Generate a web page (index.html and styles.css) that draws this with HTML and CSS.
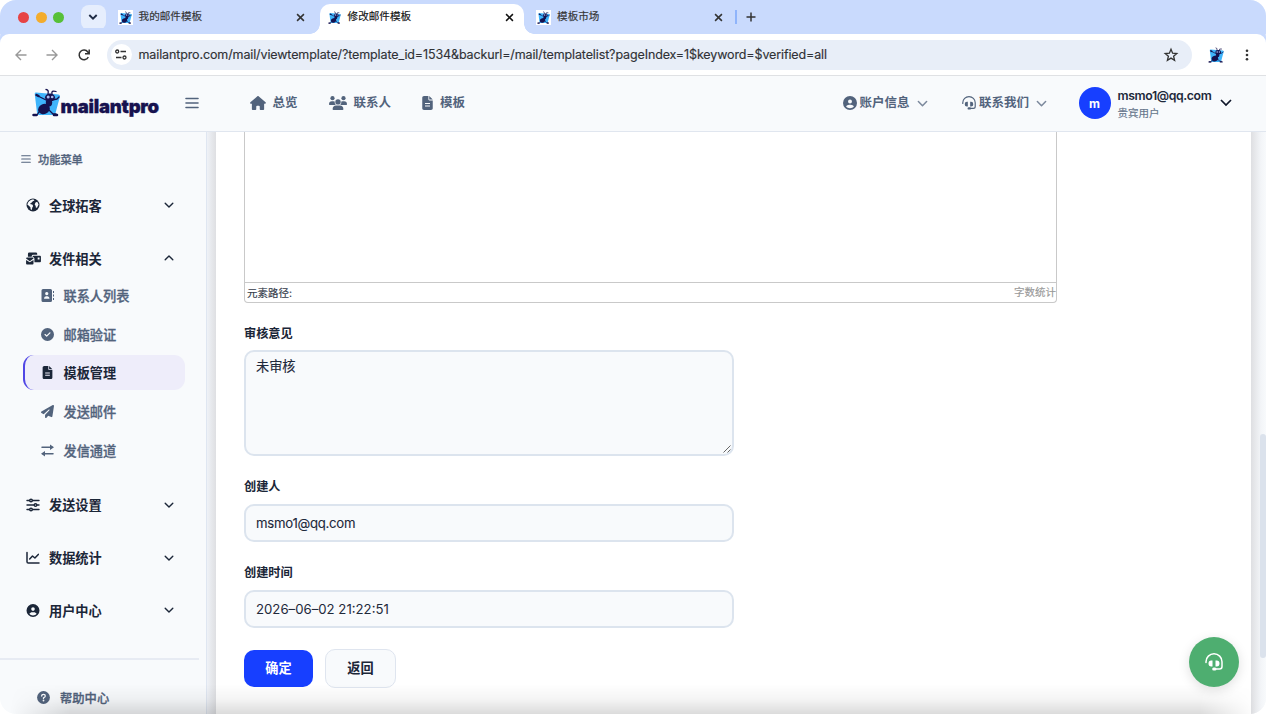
FILE: index.html
```html
<!DOCTYPE html>
<html lang="zh-CN">
<head>
<meta charset="utf-8">
<title>修改邮件模板</title>
<link rel="stylesheet" href="styles.css">
</head>
<body>
<svg class="defs" width="0" height="0">
  <symbol id="ant" viewBox="0 0 28 29">
    <path fill="#3fb4fb" d="M4 4.500Q2.400 4.500 2.800 6.500L5 25q.2 2 2 2h14q2 0 2.400-1.600L28 8.500q.2-1.500-1.500-2z"/>
    <path fill="none" stroke="#15124f" stroke-width="1.300" stroke-linecap="round" stroke-linejoin="round" d="M16 6q1-4.500-2-4.500M20 6q-1-4 4-2.500M14 12 5 7.500M20 12l5-1 2-2M9 21l-4 6H2M15 20l6 6h3"/>
    <ellipse cx="18" cy="9.500" rx="5" ry="4" fill="#15124f"/>
    <ellipse cx="17" cy="14.500" rx="3.200" ry="4" fill="#15124f"/>
    <ellipse cx="12" cy="21" rx="6" ry="5" fill="#15124f" transform="rotate(-25 12 21)"/>
    <path stroke="#15124f" stroke-width="2.500" stroke-linecap="round" d="M1.500 27h3M22 27h3M4.500 7l2 1"/>
    <circle cx="16.200" cy="9" r="1.500" fill="#a9bdf0"/><circle cx="20.200" cy="9" r="1.300" fill="#a9bdf0"/>
  </symbol>
  <symbol id="x" viewBox="0 0 10 10"><path d="M1.900 1.900l6.200 6.200M8.100 1.900l-6.200 6.200" fill="none" stroke="currentColor" stroke-width="1.400"/></symbol>
  <symbol id="down" viewBox="0 0 12 12"><path d="M2.200 4.200l3.800 3.800 3.800-3.800" fill="none" stroke="currentColor" stroke-width="1.400" stroke-linecap="round" stroke-linejoin="round"/></symbol>
  <symbol id="bars" viewBox="0 0 14 14"><path d="M1 2.500h12M1 7h12M1 11.500h12" fill="none" stroke="currentColor" stroke-width="1.600" stroke-linecap="round"/></symbol>
  <symbol id="user" viewBox="0 0 512 512"><path fill="currentColor" d="M399 384.200C376.900 345.800 335.400 320 288 320H224c-47.400 0-88.900 25.800-111 64.200c35.200 39.200 86.200 63.800 143 63.800s107.800-24.700 143-63.800zM0 256a256 256 0 1 1 512 0A256 256 0 1 1 0 256zm256 16a72 72 0 1 0 0-144 72 72 0 1 0 0 144z"/></symbol>
  <symbol id="file" viewBox="0 0 384 512"><path fill="currentColor" fill-rule="evenodd" d="M64 0C28.700 0 0 28.700 0 64V448c0 35.300 28.700 64 64 64H320c35.300 0 64-28.700 64-64V160H256c-17.700 0-32-14.300-32-32V0H64zM256 0V128H384L256 0zM100 256H284v36H100zm0 88H284v36H100z"/></symbol>
  <symbol id="headset" viewBox="0 0 18 18"><path fill="none" stroke="currentColor" stroke-width="1.500" stroke-linecap="round" d="M1 9.500V8.700a8 7.900 0 0 1 16 0v4.800q0 2.500-2.500 2.500H10"/><path fill="currentColor" d="M7.500 7.500v6H6.300Q3.500 13.500 3.500 10.500T6.300 7.500zM10.500 7.500v6h1.200q2.800 0 2.800-3T11.700 7.500z"/><rect x="7.200" y="14.500" width="4.300" height="3" rx="1.500" fill="currentColor"/></symbol>
</svg>
<div class="window">
  <header class="tabs">
    <i class="dot red"></i><i class="dot amber"></i><i class="dot green"></i>
    <span class="tabsearch"><svg width="12" height="12" viewBox="0 0 12 12"><path d="M2.300 4l3.700 3.700L9.700 4" fill="none" stroke="currentColor" stroke-width="1.900"/></svg></span>
    <div class="tab first"><span class="fav"><svg width="13" height="13"><use href="#ant"/></svg></span><span>我的邮件模板</span><svg class="close" width="11" height="11"><use href="#x"/></svg></div>
    <div class="tab active"><span class="fav"><svg width="13" height="13"><use href="#ant"/></svg></span><span>修改邮件模板</span><svg class="close" width="11" height="11"><use href="#x"/></svg></div>
    <div class="tab third"><span class="fav"><svg width="13" height="13"><use href="#ant"/></svg></span><span>模板市场</span><svg class="close" width="11" height="11"><use href="#x"/></svg></div>
    <i class="tabsep"></i>
    <svg class="plus" width="10" height="10" viewBox="0 0 10 10"><path d="M5 .5v9M.5 5h9" stroke="#333" stroke-width="1.500"/></svg>
  </header>
  <div class="toolbar">
    <svg class="nav" width="12" height="12" viewBox="0 0 12 12"><path d="M11.500 6H1M6 1 1 6l5 5" fill="none" stroke="#999" stroke-width="1.400"/></svg>
    <svg class="nav" width="12" height="12" viewBox="0 0 12 12"><path d="M.5 6H11M6 1l5 5-5 5" fill="none" stroke="#999" stroke-width="1.400"/></svg>
    <svg class="nav reload" width="12" height="12" viewBox="0 0 12 12"><path d="M10.300 8A4.800 4.800 0 1 1 9.800 3L11 4.500M11.200.5v4.300H7" fill="none" stroke="#333" stroke-width="1.500"/></svg>
    <div class="address">
      <span class="site"><svg width="12" height="11" viewBox="0 0 12 11"><g fill="none" stroke="#333" stroke-width="1.300"><circle cx="2.200" cy="2.500" r="1.500"/><path d="M5.500 2.500H11M1 8.500h5.500"/><circle cx="9.500" cy="8.500" r="1.500"/></g></svg></span>
      <span class="url">mailantpro.com/mail/viewtemplate/?template_id=1534&amp;backurl=/mail/templatelist?pageIndex=1$keyword=$verified=all</span>
      <svg class="star" width="14" height="14" viewBox="0 0 14 14"><path d="M7 1.300l1.600 3.900 4.200.3-3.200 2.700 1 4.100L7 10.100l-3.600 2.200 1-4.100L1.200 5.500l4.200-.3z" fill="none" stroke="#333" stroke-width="1.300"/></svg>
    </div>
    <svg class="ext" width="16" height="16"><use href="#ant"/></svg>
    <svg class="kebab" width="4" height="12" viewBox="0 0 4 12"><g fill="#333"><circle cx="2" cy="1.700" r="1.300"/><circle cx="2" cy="6" r="1.300"/><circle cx="2" cy="10.300" r="1.300"/></g></svg>
  </div>
  <div class="topbar">
    <div class="brand"><svg width="28" height="29"><use href="#ant"/></svg><b>mailantpro</b></div>
    <svg class="burger" width="14" height="14"><use href="#bars"/></svg>
    <nav class="mainnav">
      <a><svg width="16" height="14" viewBox="0 0 576 512"><path fill="currentColor" d="M575.800 255.500c0 18-15 32.100-32 32.100h-32l.7 160.200V472c0 22.100-17.900 40-40 40H392c-22.100 0-40-17.900-40-40V384c0-17.700-14.300-32-32-32H256c-17.700 0-32 14.300-32 32v88c0 22.100-17.900 40-40 40H104c-22.100 0-40-17.900-40-40V287.600H32c-18 0-32-14-32-32.100c0-9 3-17 10-24L266.400 8c7-7 15-8 22-8s15 2 21 7L564.800 231.500c8 7 12 15 11 24z"/></svg><span>总览</span></a>
      <a><svg width="18" height="14" viewBox="0 0 18 14"><g fill="currentColor"><circle cx="3.500" cy="2.200" r="2.100"/><circle cx="14.500" cy="2.200" r="2.100"/><circle cx="9" cy="5.900" r="2.700"/><path d="M0 8.200q0-3 2.900-3h1.300q1 0 1.500.4-.4 1.900 1 3.300H.6Q0 8.900 0 8.200zM18 8.200q0-3-2.900-3h-1.300q-1 0-1.500.4.4 1.900-1 3.300h6.100q.6 0 .6-.7zM3.600 13.200Q3.800 9.500 7 9.500h4q3.200 0 3.400 3.700 0 .8-.8.8H4.400q-.8 0-.8-.8z"/></g></svg><span>联系人</span></a>
      <a><svg width="11" height="14"><use href="#file"/></svg><span>模板</span></a>
    </nav>
    <a class="drop account"><svg width="14" height="14"><use href="#user"/></svg><span>账户信息</span><svg class="chev" width="13" height="13"><use href="#down"/></svg></a>
    <a class="drop contact"><svg width="14" height="14"><use href="#headset"/></svg><span>联系我们</span><svg class="chev" width="13" height="13"><use href="#down"/></svg></a>
    <span class="avatar">m</span>
    <div class="who"><b>msmo1@qq.com</b><small>贵宾用户</small></div>
    <svg class="whochev" width="12" height="8" viewBox="0 0 12 8"><path d="M1 1l5 5 5-5" fill="none" stroke="#0f172a" stroke-width="1.700"/></svg>
  </div>
  <div class="main">
    <aside class="side">
      <div class="sidehead"><svg width="12" height="10"><use href="#bars"/></svg><span>功能菜单</span></div>
      <div class="group"><svg width="14" height="14" viewBox="0 0 14 14"><circle cx="7" cy="7" r="6.500" fill="currentColor"/><path fill="#f8fafc" d="M7.200 1.300 8.500 2.400 6.800 3.200 5.800 4.600 4.300 5.200 4.600 6.300 6.300 6.500 7.200 7.900 6.300 9.500 5.800 12 4.600 11.300 4.400 9.300 2.600 7.400 1.400 6.700Q1.800 2.700 7.200 1.300zM9.500 4.600l1.700-.8L12.600 6.500 11.800 8 11 9.800 9.800 9.600 9.700 8 8.700 6.600z"/></svg><span>全球拓客</span><svg class="chev" width="12" height="12"><use href="#down"/></svg></div>
      <div class="group open"><svg width="15" height="13" viewBox="0 0 16 14"><g fill="currentColor"><path d="M2 5V2q0-1.500 1.500-1.500h7Q12 .5 12 2v1H7.500Q6 3 6 5z"/><path d="M0 7q0-1 1-1h6q1 0 1 1L4 10zM0 8.500l4 2.600 4-2.600V12.500q0 1-1 1H1q-1 0-1-1z"/><path fill-rule="evenodd" d="M8 4h7q1 0 1 1v5q0 1-1 1H9V7Q9 5.500 7 5 7 4 8 4zm4.500 2v2h2V6z"/></g></svg><span>发件相关</span><svg class="chev up" width="12" height="12"><use href="#down"/></svg></div>
      <ul class="sub">
        <li><svg width="13" height="13" viewBox="0 0 13 13"><path fill="currentColor" fill-rule="evenodd" d="M2 0h7.500q1.500 0 1.500 1.500v10q0 1.500-1.500 1.500H2Q.5 13 .5 11.500v-10Q.5 0 2 0zM12 2h1v2h-1zM12 5.500h1v2h-1zM12 9h1v2h-1zM5.700 3a1.600 1.600 0 1 0 .1 0zM3 9.800h5.500Q8.500 7.300 6.500 7.300H5Q3 7.300 3 9.800z"/></svg><span>联系人列表</span></li>
        <li><svg width="13" height="13" viewBox="0 0 512 512"><path fill="currentColor" d="M256 512A256 256 0 1 0 256 0a256 256 0 1 0 0 512zM369 209L241 337c-9.400 9.400-24.600 9.400-33.900 0l-64-64c-9.400-9.400-9.400-24.600 0-33.900s24.600-9.400 33.900 0l47 47L335 175c9.400-9.400 24.600-9.400 33.900 0s9.400 24.600 0 33.900z"/></svg><span>邮箱验证</span></li>
        <li class="current"><svg width="13" height="13"><use href="#file"/></svg><span>模板管理</span></li>
        <li><svg width="13" height="13" viewBox="0 0 512 512"><path fill="currentColor" d="M498.100 5.600c10.100 7 15.400 19.100 13.500 31.200l-64 416c-1.500 9.700-7.400 18.200-16 23s-18.900 5.400-28 1.600L284 427.700l-68.500 74.100c-8.900 9.700-22.900 12.900-35.200 8.100S160 493.200 160 480V396.400c0-4 1.500-7.800 4.200-10.700L331.800 202.800c5.800-6.300 5.600-16-.4-22s-15.700-6.400-22-.7L106 360.800 17.700 316.600C7.100 311.300 .3 300.700 0 288.900s5.900-22.800 16.100-28.700l448-256c10.700-6.100 23.900-5.500 34 1.400z"/></svg><span>发送邮件</span></li>
        <li><svg width="13" height="13" viewBox="0 0 13 13"><path fill="none" stroke="currentColor" stroke-width="1.500" stroke-linecap="round" d="M1 3.300h10M2 9.700h10"/><path fill="currentColor" d="M9 .5l4 2.800-4 2.800zM4 6.900 0 9.700l4 2.800z"/></svg><span>发信通道</span></li>
      </ul>
      <div class="group"><svg width="14" height="14" viewBox="0 0 14 14"><g fill="#f8fafc" stroke="currentColor" stroke-width="1.400" stroke-linecap="round"><path d="M1 2.500h12M1 7h12M1 11.500h12"/><circle cx="5" cy="2.500" r="1.300"/><circle cx="9.500" cy="7" r="1.300"/><circle cx="5" cy="11.500" r="1.300"/></g></svg><span>发送设置</span><svg class="chev" width="12" height="12"><use href="#down"/></svg></div>
      <div class="group"><svg width="14" height="14" viewBox="0 0 14 14"><path d="M1 1.500v9.200q0 1.300 1.300 1.300H13M3.700 8l2.800-3 2.400 2 3.400-3.600" fill="none" stroke="currentColor" stroke-width="1.500" stroke-linecap="round" stroke-linejoin="round"/></svg><span>数据统计</span><svg class="chev" width="12" height="12"><use href="#down"/></svg></div>
      <div class="group"><svg width="13" height="13"><use href="#user"/></svg><span>用户中心</span><svg class="chev" width="12" height="12"><use href="#down"/></svg></div>
      <hr>
      <div class="help"><svg width="13" height="13" viewBox="0 0 13 13"><circle cx="6.500" cy="6.500" r="6.400" fill="currentColor"/><path d="M4.700 5q0-1.600 1.800-1.600T8.300 5q0 1-1.800 1.900v.5" fill="none" stroke="#f8fafc" stroke-width="1.300" stroke-linecap="round"/><circle cx="6.500" cy="9.500" r=".9" fill="#f8fafc"/></svg><span>帮助中心</span></div>
    </aside>
    <section class="content">
      <div class="card">
        <div class="editor"><div class="status"><span>元素路径:</span><em>字数统计</em></div></div>
        <label class="l1">审核意见</label>
        <div class="field area">未审核<svg class="grip" width="8" height="8" viewBox="0 0 8 8"><path d="M.5 7.500l7-7M4.500 7.500l3-3" stroke="#555" stroke-width=".9"/></svg></div>
        <label class="l2">创建人</label>
        <div class="field"><span class="mail">msmo1@qq.com</span></div>
        <label class="l3">创建时间</label>
        <div class="field"><span class="date">2026–06–02 21:22:51</span></div>
        <div class="buttons"><button class="ok">确定</button><button class="back">返回</button></div>
      </div>
    </section>
  </div>
  <i class="thumb"></i>
  <i class="shade"></i>
  <span class="chat"><svg width="18" height="18"><use href="#headset"/></svg></span>
</div>
</body>
</html>
```
FILE: styles.css
```css
* { box-sizing: border-box; }
body { margin: 0; background: #fff; font-family: Inter, "Noto Sans CJK SC", sans-serif; color: #1e293b; }
.defs { position: absolute; }
svg { flex: none; display: block; overflow: visible; }
.window { position: relative; width: 1266px; height: 714px; overflow: hidden; border-radius: 16px; display: flex; flex-direction: column; background: #f8fafc; }

.tabs { height: 34px; flex: none; background: #c9dafd; display: flex; align-items: center; padding-left: 18px; }
.dot { width: 11px; height: 11px; border-radius: 50%; margin-right: 6.700px; flex: none; }
.red { background: #e64345; }
.amber { background: #f3ac2d; }
.green { background: #57c038; }
.tabsearch { width: 25px; height: 25px; border-radius: 8px; background: #e6eefd; display: flex; align-items: center; justify-content: center; margin-left: 9.500px; color: #1f2b45; }
.tab { display: flex; align-items: center; font-size: 10.600px; line-height: 16px; color: #333; -webkit-text-stroke: .15px currentColor; }
.tab .fav { width: 15px; height: 15px; background: #fff; display: flex; align-items: center; justify-content: center; margin-right: 6px; }
.tab .close { margin-left: auto; }
.first { width: 188px; margin-left: 12px; }
.active { position: relative; width: 204px; height: 30px; margin: 4px 0 0 14px; padding: 0 8.500px 4px 7px; background: #fff; border-radius: 10px 10px 0 0; color: #111; }
.active::before, .active::after { content: ""; position: absolute; bottom: 0; width: 10px; height: 10px; }
.active::before { left: -10px; background: radial-gradient(circle at 0 0, transparent 9.500px, #fff 10px); }
.active::after { right: -10px; background: radial-gradient(circle at 100% 0, transparent 9.500px, #fff 10px); }
.third { width: 188px; margin-left: 12.500px; }
.tabsep { width: 1.500px; height: 14px; background: #8fb4fb; margin-left: 11px; }
.plus { margin-left: 9px; }

.toolbar { height: 42px; flex: none; background: #fff; display: flex; align-items: center; padding: 0 17px 0 14.500px; border-bottom: 1px solid #dfe1e4; box-shadow: 0 -6px #c9dafd; border-radius: 9px 9px 0 0; }
.nav { margin-right: 19.500px; }
.reload { margin-right: 17px; }
.address { width: 1085px; height: 30px; border-radius: 15px; background: #e8eef8; display: flex; align-items: center; padding: 0 14px 0 4px; }
.site { width: 21px; height: 21px; border-radius: 50%; background: #fff; display: flex; align-items: center; justify-content: center; }
.url { margin-left: 7px; font-size: 12.500px; line-height: 18px; letter-spacing: -.12px; white-space: nowrap; color: #303236; -webkit-text-stroke: .15px currentColor; }
.star { margin-left: auto; }
.ext { margin-left: 16px; }
.kebab { margin-left: auto; }

.topbar { height: 56px; flex: none; background: #f8fafc; border-bottom: 1px solid #e0e6ef; display: flex; align-items: center; padding: 0 0 1px 31.500px; color: #52637c; position: relative; }
.brand { display: flex; align-items: center; width: 153px; margin-top: -2px; }
.brand b { font-size: 18.500px; line-height: 24px; letter-spacing: -.25px; font-weight: 900; color: #17124f; margin: 7px 0 0 1px; -webkit-text-stroke: .3px currentColor; }
.mainnav { display: flex; margin-left: 51px; gap: 31px; width: 593px; }
.mainnav a { display: flex; align-items: center; gap: 7px; }
.topbar a { font-size: 12.500px; line-height: 20px; font-weight: 600; white-space: nowrap; }
.drop { display: flex; align-items: center; gap: 3px; width: 119.500px; }
.drop .chev { margin-left: 3px; opacity: .75; }
.avatar { width: 32px; height: 32px; flex: none; border-radius: 50%; background: #173fff; color: #fff; font-size: 12px; font-weight: 700; display: flex; align-items: center; justify-content: center; margin-left: -3px; }
.who { margin-left: 7px; width: 102px; display: flex; flex-direction: column; margin-top: 2px; }
.who b { font-size: 12.300px; line-height: 18px; letter-spacing: -.38px; font-weight: 600; color: #1e293b; }
.who small { font-size: 10.500px; line-height: 17px; color: #64748b; -webkit-text-stroke: .15px currentColor; }

.main { flex: 1; display: flex; min-height: 0; }
.side { width: 207px; flex: none; border-right: 1px solid #dfe6f1; padding-top: 14px; overflow: hidden; }
.sidehead { display: flex; align-items: center; height: 26px; padding-left: 20px; gap: 6px; font-size: 11.200px; font-weight: 500; color: #52637c; -webkit-text-stroke: .3px currentColor; }
.group { display: flex; align-items: center; height: 52.700px; padding: 0 31px 0 26px; font-size: 13.200px; font-weight: 600; color: #1b2638; }
.sidehead + .group { margin-top: 7px; }
.group > svg:first-child { width: 14px; margin-right: 9px; }
.group.open > svg:first-child { width: 15px; margin-right: 8px; }
.group .chev { margin-left: auto; }
.up { transform: rotate(180deg); }
.sub { list-style: none; margin: -6.500px 0 11px; padding: 0; }
.sub li { display: flex; align-items: center; height: 35px; margin: 0 21px 3.700px 23px; padding-left: 18px; gap: 9.500px; font-size: 13.200px; font-weight: 500; color: #52637c; -webkit-text-stroke: .3px currentColor; }
.sub svg { stroke-width: 0; }
.sub .current { border-left: 2px solid #5046e5; padding-left: 16px; border-radius: 11px; background: #eeedfa; color: #1b2638; font-weight: 600; -webkit-text-stroke: 0; }
.side hr { width: 199px; height: 2px; border: 0; background: #e7ebf3; margin: 21px 0 0; }
.help { display: flex; align-items: center; height: 38px; margin-top: 19px; padding-left: 37px; gap: 10px; font-size: 12.300px; font-weight: 500; color: #52637c; -webkit-text-stroke: .3px currentColor; }

.content { flex: 1; padding: 0 15px 0 9px; background: linear-gradient(90deg, #eff2f7, #dedfe2 9px, #dedfe2 1044px, #f3f5f8 1054px, #f8fafc); }
.card { height: 100%; background: #fff; padding-left: 28px; display: flex; flex-direction: column; align-items: flex-start; }
.editor { width: 813px; height: 171px; flex: none; border: 1px solid #c9c9c9; border-top: 0; border-radius: 0 0 4px 4px; display: flex; align-items: flex-end; }
.status { flex: 1; height: 20px; border-top: 1px solid #c9c9c9; display: flex; justify-content: space-between; padding: 1px 0 0 2px; font-size: 10.500px; line-height: 19px; color: #333b4a; -webkit-text-stroke: .15px currentColor; }
.status em { font-style: normal; color: #999; line-height: 17px; }
.card label { font-size: 12.200px; line-height: 18px; font-weight: 600; color: #1b2638; flex: none; }
.l1 { margin: 22px 0 7px; }
.l2 { margin: 22px 0 8px; }
.l3 { margin: 22px 0 8px; }
.field { position: relative; width: 490px; height: 38px; flex: none; border: 2px solid #dce4ee; border-radius: 10px; background: #f8fafc; padding: 0 10px; font-size: 13.200px; line-height: 34px; }
.mail { letter-spacing: -.28px; -webkit-text-stroke: .1px currentColor; }
.area { height: 106px; line-height: 29px; -webkit-text-stroke: .15px currentColor; }
.grip { position: absolute; right: 1px; bottom: 1px; }
.buttons { display: flex; align-items: center; gap: 12px; margin-top: 20.500px; }
.buttons button { font: 600 13.200px Inter, "Noto Sans CJK SC", sans-serif; border-radius: 10px; padding: 0 0 1px; }
.ok { width: 69px; height: 37px; border: 0; background: #173fff; color: #fff; }
.back { width: 71px; height: 39px; border: 1px solid #dfe5ef; background: #f8fafc; color: #1b2638; }

.thumb { position: absolute; left: 1260px; top: 434px; width: 6px; height: 224px; border-radius: 4px; background: #dbe2ec; }
.shade { position: absolute; left: 0; right: 0; bottom: 0; height: 30px; background: linear-gradient(rgba(0,0,0,0), rgba(0,0,0,.04) 50%, rgba(0,0,0,.14)); -webkit-mask-image: linear-gradient(90deg, transparent 10px, #000 70px, #000 1200px, transparent 1256px); mask-image: linear-gradient(90deg, transparent 10px, #000 70px, #000 1200px, transparent 1256px); }
.chat { position: absolute; left: 1189px; top: 637px; width: 50px; height: 50px; border-radius: 50%; background: #4eae70; color: #fff; display: flex; align-items: center; justify-content: center; box-shadow: 0 3px 12px rgba(0,0,0,.13); }
```
